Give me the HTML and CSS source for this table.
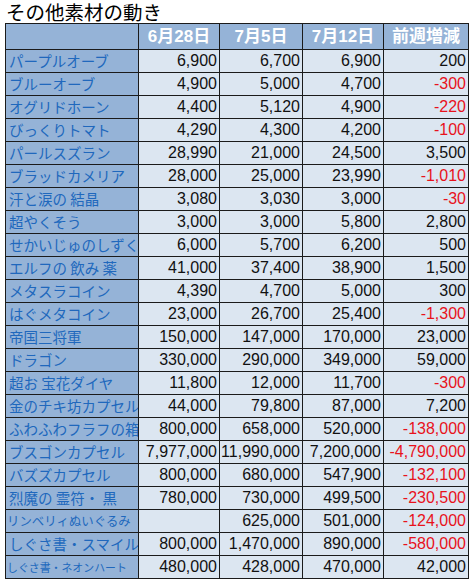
FILE: index.html
```html
<!DOCTYPE html>
<html lang="ja">
<head>
    <meta charset="UTF-8">
    <title>その他素材の動き</title>
    <link rel="stylesheet" href="styles.css">
</head>
<body>
    <div class="title">その他素材の動き</div>
    <table class="price-table">
        <colgroup>
            <col class="col-name">
            <col class="col-w1">
            <col class="col-w2">
            <col class="col-w3">
            <col class="col-diff">
        </colgroup>
        <thead>
            <tr>
                <th></th>
                <th>6月28日</th>
                <th>7月5日</th>
                <th>7月12日</th>
                <th>前週増減</th>
            </tr>
        </thead>
        <tbody>
            <tr><td class="name">パープルオーブ</td><td>6,900</td><td>6,700</td><td>6,900</td><td>200</td></tr>
            <tr><td class="name">ブルーオーブ</td><td>4,900</td><td>5,000</td><td>4,700</td><td class="minus">-300</td></tr>
            <tr><td class="name">オグリドホーン</td><td>4,400</td><td>5,120</td><td>4,900</td><td class="minus">-220</td></tr>
            <tr><td class="name">びっくりトマト</td><td>4,290</td><td>4,300</td><td>4,200</td><td class="minus">-100</td></tr>
            <tr><td class="name">パールスズラン</td><td>28,990</td><td>21,000</td><td>24,500</td><td>3,500</td></tr>
            <tr><td class="name">ブラッドカメリア</td><td>28,000</td><td>25,000</td><td>23,990</td><td class="minus">-1,010</td></tr>
            <tr><td class="name">汗と涙の 結晶</td><td>3,080</td><td>3,030</td><td>3,000</td><td class="minus">-30</td></tr>
            <tr><td class="name">超やくそう</td><td>3,000</td><td>3,000</td><td>5,800</td><td>2,800</td></tr>
            <tr><td class="name">せかいじゅのしずく</td><td>6,000</td><td>5,700</td><td>6,200</td><td>500</td></tr>
            <tr><td class="name">エルフの 飲み 薬</td><td>41,000</td><td>37,400</td><td>38,900</td><td>1,500</td></tr>
            <tr><td class="name">メタスラコイン</td><td>4,390</td><td>4,700</td><td>5,000</td><td>300</td></tr>
            <tr><td class="name">はぐメタコイン</td><td>23,000</td><td>26,700</td><td>25,400</td><td class="minus">-1,300</td></tr>
            <tr><td class="name">帝国三将軍</td><td>150,000</td><td>147,000</td><td>170,000</td><td>23,000</td></tr>
            <tr><td class="name">ドラゴン</td><td>330,000</td><td>290,000</td><td>349,000</td><td>59,000</td></tr>
            <tr><td class="name">超お 宝花ダイヤ</td><td>11,800</td><td>12,000</td><td>11,700</td><td class="minus">-300</td></tr>
            <tr><td class="name">金のチキ坊カプセル</td><td>44,000</td><td>79,800</td><td>87,000</td><td>7,200</td></tr>
            <tr><td class="name">ふわふわフラフの箱</td><td>800,000</td><td>658,000</td><td>520,000</td><td class="minus">-138,000</td></tr>
            <tr><td class="name">ブスゴンカプセル</td><td>7,977,000</td><td>11,990,000</td><td>7,200,000</td><td class="minus">-4,790,000</td></tr>
            <tr><td class="name">バズズカプセル</td><td>800,000</td><td>680,000</td><td>547,900</td><td class="minus">-132,100</td></tr>
            <tr><td class="name">烈魔の 霊符・ 黒</td><td>780,000</td><td>730,000</td><td>499,500</td><td class="minus">-230,500</td></tr>
            <tr><td class="name small">リンベリィぬいぐるみ</td><td></td><td>625,000</td><td>501,000</td><td class="minus">-124,000</td></tr>
            <tr><td class="name">しぐさ書・スマイル</td><td>800,000</td><td>1,470,000</td><td>890,000</td><td class="minus">-580,000</td></tr>
            <tr><td class="name tiny">しぐさ書・ネオンハート</td><td>480,000</td><td>428,000</td><td>470,000</td><td>42,000</td></tr>
        </tbody>
    </table>
</body>
</html>
```

FILE: styles.css
```css
body {
    margin: 0;
    background: #ffffff;
    font-family: "Liberation Sans", "Noto Sans CJK JP", sans-serif;
}
.title {
    height: 23px;
    padding-left: 6px;
    font-family: "Noto Sans CJK JP", sans-serif;
    font-size: 19.5px;
    line-height: 24px;
    color: #000;
}
.price-table {
    margin-left: 5px;
    border-collapse: collapse;
    table-layout: fixed;
    width: 463px;
}
.col-name { width: 133px; }
.col-w1 { width: 81px; }
.col-w2 { width: 83px; }
.col-w3 { width: 81px; }
.col-diff { width: 85px; }

.price-table th,
.price-table td {
    border: 1px solid #1b1b1b;
    padding: 0 2px 0 0;
    white-space: nowrap;
    overflow: hidden;
}
.price-table th {
    height: 25px;
    padding: 0;
    background: #95b3d7;
    color: #ffffff;
    font-family: "Liberation Sans", "Noto Sans CJK JP", sans-serif;
    font-size: 17px;
    font-weight: bold;
    text-align: center;
    line-height: 25px;
}
.price-table td {
    height: 22px;
    background: #dce6f1;
    color: #111;
    font-size: 16px;
    text-align: right;
    line-height: 22px;
}
.price-table td.name {
    background: #95b3d7;
    color: #2068bd;
    font-family: "Noto Sans CJK JP", sans-serif;
    font-size: 14.5px;
    text-align: left;
    text-overflow: clip;
    padding-left: 3px;
    padding-right: 0;
}
.price-table td.small { font-size: 12.4px; padding-left: 1px; }
.price-table td.tiny { font-size: 10.9px; padding-left: 1px; }
.price-table td.minus { color: #e8121c; }
```
